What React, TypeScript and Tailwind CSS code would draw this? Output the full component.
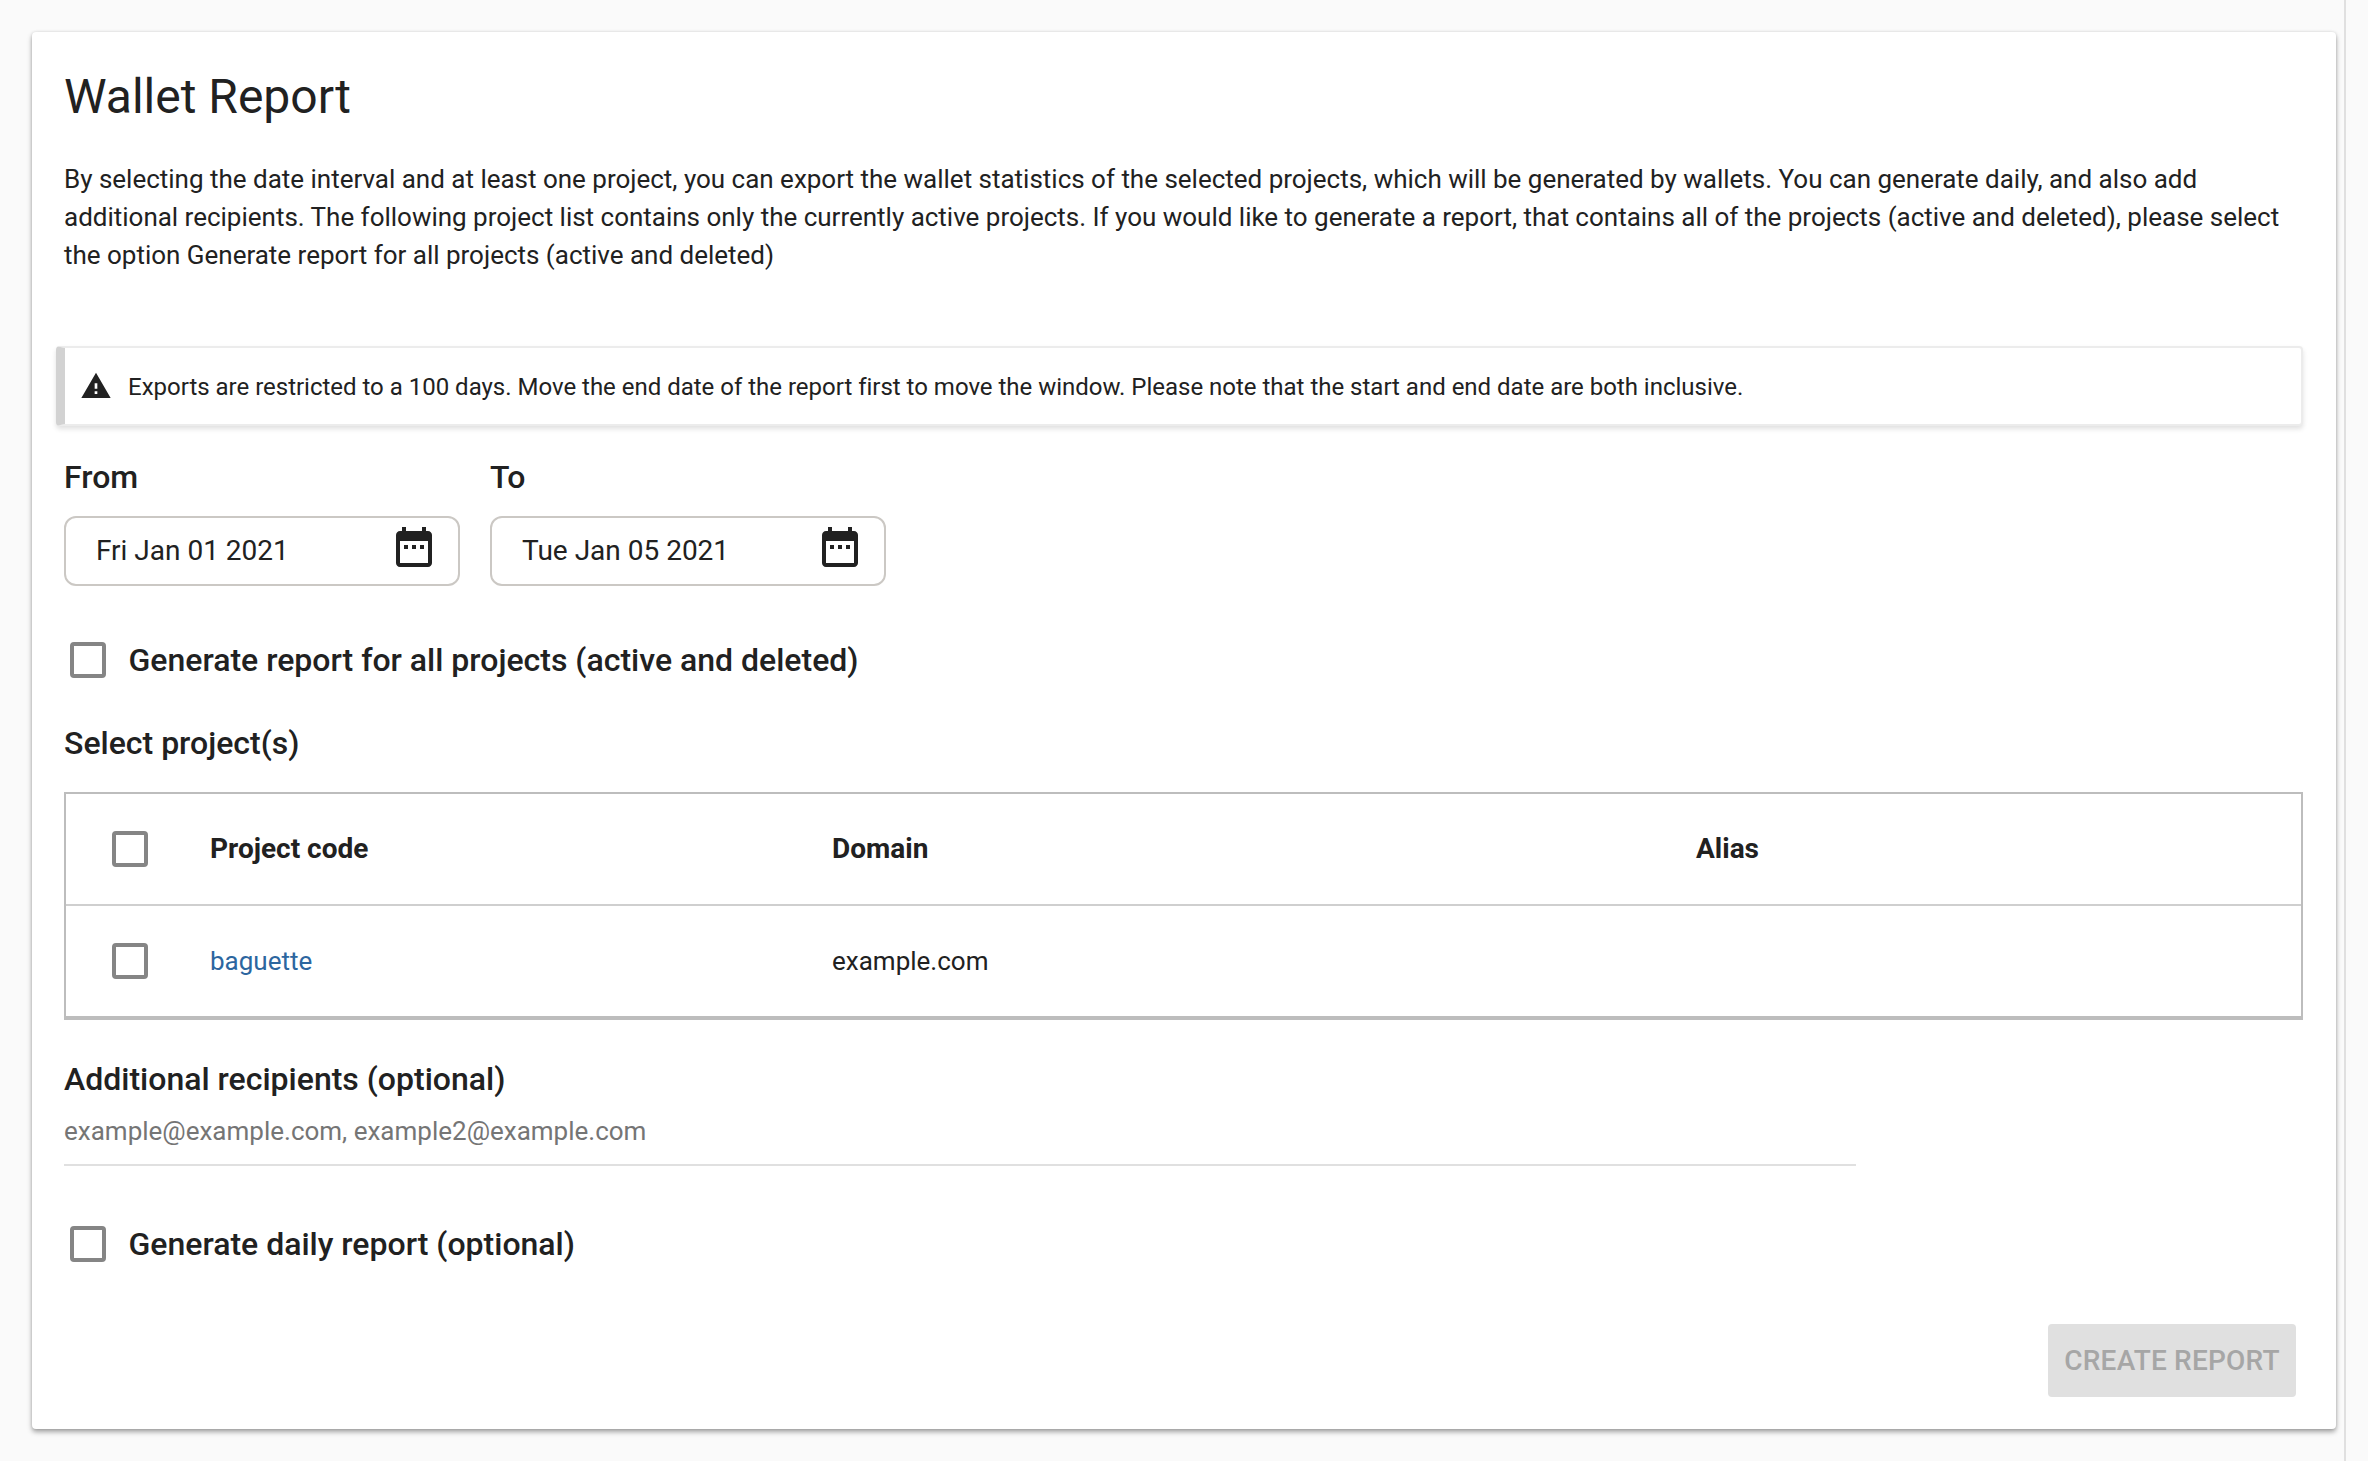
import React from 'react';

const Checkbox = () => (
  <span className="block w-9 h-9 shrink-0 rounded-[4px] border-4 border-[#858585] bg-white" />
);

const DateRangeIcon = () => (
  <svg viewBox="0 0 24 24" className="w-12 h-12 mb-2 fill-[#212121] shrink-0">
    <path d="M9 11H7v2h2v-2zm4 0h-2v2h2v-2zm4 0h-2v2h2v-2zm2-7h-1V2h-2v2H8V2H6v2H5c-1.11 0-1.99.9-1.99 2L3 20c0 1.1.89 2 2 2h14c1.1 0 2-.9 2-2V6c0-1.1-.9-2-2-2zm0 16H5V9h14v11z" />
  </svg>
);

const DateField = ({ label, value }: { label: string; value: string }) => (
  <div className="w-[396px]">
    <div className="text-[32px] leading-[36px] font-medium mb-[21px]">{label}</div>
    <div className="h-[70px] flex items-center justify-between pl-[30px] pr-[20px] rounded-[12px] border-2 border-[#cbc8c4]">
      <span className="text-[28px]">{value}</span>
      <DateRangeIcon />
    </div>
  </div>
);

export default function App() {
  return (
    <div className="min-h-[1461px] flex bg-[#fafafa] text-[#212121] font-['Roboto',sans-serif]">
      <main className="w-[2344px] shrink-0 pt-8 pl-8 pr-2">
        <div className="bg-white rounded-[4px] shadow-[0_3px_5px_rgba(0,0,0,0.35),0_0_3px_rgba(0,0,0,0.12)] h-[1397px] pt-[40px] pl-8 pr-[33px]">
          <h1 className="text-[48px] leading-[50px] font-normal">Wallet Report</h1>
          <p className="mt-[38px] text-[26px] leading-[38px] tracking-[-0.01px] max-w-[2240px]">
            By selecting the date interval and at least one project, you can export the wallet statistics of the selected projects, which will be generated by wallets. You can generate daily, and also add additional recipients. The following project list contains only the currently active projects. If you would like to generate a report, that contains all of the projects (active and deleted), please select the option Generate report for all projects (active and deleted)
          </p>

          <div className="mt-[72px] -ml-2 h-[80px] flex items-center bg-white rounded-[4px] border-2 border-[#ececec] border-l-[9px] border-l-[#d2d2d2] shadow-[0_3px_5px_rgba(0,0,0,0.12)] pl-[15px]">
            <svg viewBox="0 0 24 24" className="w-8 h-8 fill-[#212121] shrink-0">
              <path d="M1 21h22L12 2 1 21zm12-3h-2v-2h2v2zm0-4h-2v-4h2v4z" />
            </svg>
            <span className="ml-4 pt-[2px] text-[24px] tracking-[-0.01px]">
              Exports are restricted to a 100 days. Move the end date of the report first to move the window. Please note that the start and end date are both inclusive.
            </span>
          </div>

          <div className="mt-[33px] flex gap-[30px]">
            <DateField label="From" value="Fri Jan 01 2021" />
            <DateField label="To" value="Tue Jan 05 2021" />
          </div>

          <label className="mt-[56px] ml-[6px] flex items-center gap-[22.5px] text-[32px] leading-[36px] font-medium">
            <Checkbox />
            Generate report for all projects (active and deleted)
          </label>

          <h2 className="mt-[45px] text-[32px] leading-[40px] font-medium">Select project(s)</h2>

          <div className="mt-[29px] border-2 border-b-4 border-[#bdbdbd] text-[26px]">
            <div className="h-[112px] flex items-center border-b-2 border-[#cfcfcf] text-[28px] font-bold">
              <div className="w-[144px] pl-[46px] shrink-0"><Checkbox /></div>
              <div className="w-[622px] shrink-0">Project code</div>
              <div className="w-[864px] shrink-0">Domain</div>
              <div>Alias</div>
            </div>
            <div className="h-[110px] flex items-center">
              <div className="w-[144px] pl-[46px] shrink-0"><Checkbox /></div>
              <div className="w-[622px] shrink-0 text-[#2c669f]">baguette</div>
              <div className="w-[864px] shrink-0">example.com</div>
            </div>
          </div>

          <h2 className="mt-[39px] text-[32px] leading-[40px] font-medium">Additional recipients (optional)</h2>

          <div className="mt-[13px] w-[1792px] h-[54px] pb-[13px] flex items-center border-b-2 border-[#e0e0e0] text-[#757575] text-[26px]">
            example@example.com, example2@example.com
          </div>

          <label className="mt-[60px] ml-[6px] flex items-center gap-[22.5px] text-[32px] leading-[36px] font-medium">
            <Checkbox />
            Generate daily report (optional)
          </label>

          <div className="mt-[62px] flex justify-end pr-[7px]">
            <button disabled className="w-[248px] h-[73px] rounded-[4px] bg-[#e0e0e0] text-[#a6a6a6] text-[28px] font-medium tracking-[0.2px]">
              CREATE REPORT
            </button>
          </div>
        </div>
      </main>
      <aside className="flex-1 border-l-2 border-[#e0e0e0]" />
    </div>
  );
}
